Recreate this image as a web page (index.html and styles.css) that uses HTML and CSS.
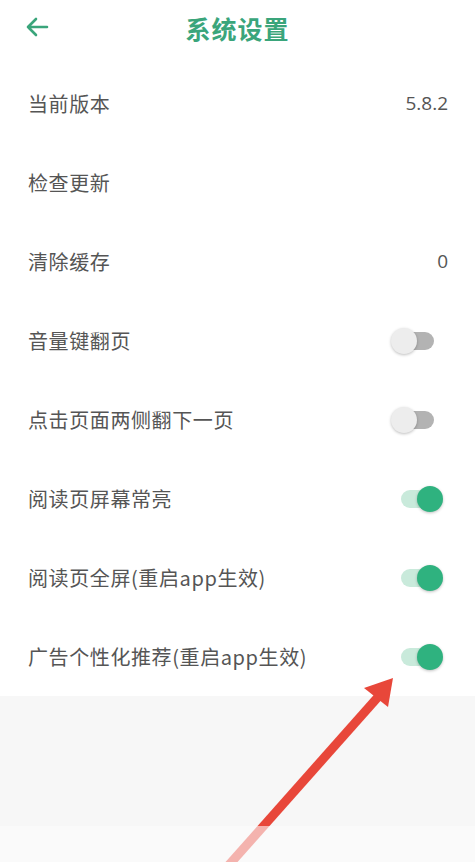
FILE: index.html
```html
<!DOCTYPE html>
<html lang="zh-CN">
<head>
<meta charset="utf-8">
<title>系统设置</title>
<link rel="stylesheet" href="styles.css">
</head>
<body>
<div class="page">
  <header class="header">
    <svg class="back" width="24" height="20" viewBox="0 0 24 20">
      <path d="M22 10 H3 M11 2 L3 10 L11 18" fill="none" stroke="#3aa57b" stroke-width="2.6" stroke-linecap="round" stroke-linejoin="round"/>
    </svg>
    <h1 class="title">系统设置</h1>
  </header>
  <ul class="list">
    <li class="row"><span class="label">当前版本</span><span class="value">5.8.2</span></li>
    <li class="row"><span class="label">检查更新</span></li>
    <li class="row"><span class="label">清除缓存</span><span class="value">0</span></li>
    <li class="row"><span class="label">音量键翻页</span><span class="toggle"><span class="track"></span><span class="thumb"></span></span></li>
    <li class="row"><span class="label">点击页面两侧翻下一页</span><span class="toggle"><span class="track"></span><span class="thumb"></span></span></li>
    <li class="row"><span class="label">阅读页屏幕常亮</span><span class="toggle on"><span class="track"></span><span class="thumb"></span></span></li>
    <li class="row"><span class="label">阅读页全屏(重启app生效)</span><span class="toggle on"><span class="track"></span><span class="thumb"></span></span></li>
    <li class="row"><span class="label">广告个性化推荐(重启app生效)</span><span class="toggle on"><span class="track"></span><span class="thumb"></span></span></li>
  </ul>
  <div class="filler"></div>
  <svg class="annot" width="475" height="862" viewBox="0 0 475 862">
    <path d="M220 875 L378 697" stroke="#e8473a" stroke-width="9" stroke-linecap="butt"/>
    <path d="M393 678 L364 688 L388 707 Z" fill="#e8473a"/>
  </svg>
  <div class="navbar"></div>
</div>
</body>
</html>
```

FILE: styles.css
```css
html, body {
  margin: 0;
  padding: 0;
  background: #ffffff;
}
.page {
  position: relative;
  width: 475px;
  height: 862px;
  overflow: hidden;
  display: flex;
  flex-direction: column;
  font-family: "Noto Sans CJK SC", "Noto Sans", sans-serif;
}
.header {
  height: 56px;
  flex: none;
  display: flex;
  align-items: center;
  justify-content: center;
  position: relative;
}
.back {
  position: absolute;
  left: 25px;
  top: 17px;
}
.title {
  margin: 0;
  font-size: 25px;
  font-weight: 700;
  color: #3aa57b;
  letter-spacing: 1px;
  line-height: 1;
}
.list {
  list-style: none;
  margin: 8px 0 0 0;
  padding: 0;
  flex: none;
}
.row {
  height: 79px;
  display: flex;
  align-items: center;
  justify-content: space-between;
  padding: 0 27px 0 28px;
}
.label {
  font-size: 20px;
  color: #555555;
  line-height: 1;
  letter-spacing: 0.6px;
}
.value {
  font-family: "Open Sans", "Noto Sans", sans-serif;
  font-size: 19px;
  color: #555555;
  line-height: 1;
}
.toggle {
  position: relative;
  width: 52px;
  height: 28px;
  margin-right: 5px;
}
.track {
  position: absolute;
  left: 10px;
  right: 9px;
  top: 5px;
  height: 18px;
  border-radius: 9px;
  background: #b3b3b3;
}
.thumb {
  position: absolute;
  left: 0;
  top: 1px;
  width: 26px;
  height: 26px;
  border-radius: 50%;
  background: #ededed;
  box-shadow: 0 1px 3px rgba(0,0,0,0.25);
}
.toggle.on .track {
  background: #c9eadb;
}
.toggle.on .thumb {
  left: auto;
  right: 0;
  background: #2fb27f;
}
.filler {
  flex: 1;
  background: #f7f7f7;
}
.annot {
  position: absolute;
  left: 0;
  top: 0;
  pointer-events: none;
}
.navbar {
  position: absolute;
  left: 0;
  right: 0;
  bottom: 0;
  height: 36px;
  background: rgba(252,252,252,0.6);
}
```
